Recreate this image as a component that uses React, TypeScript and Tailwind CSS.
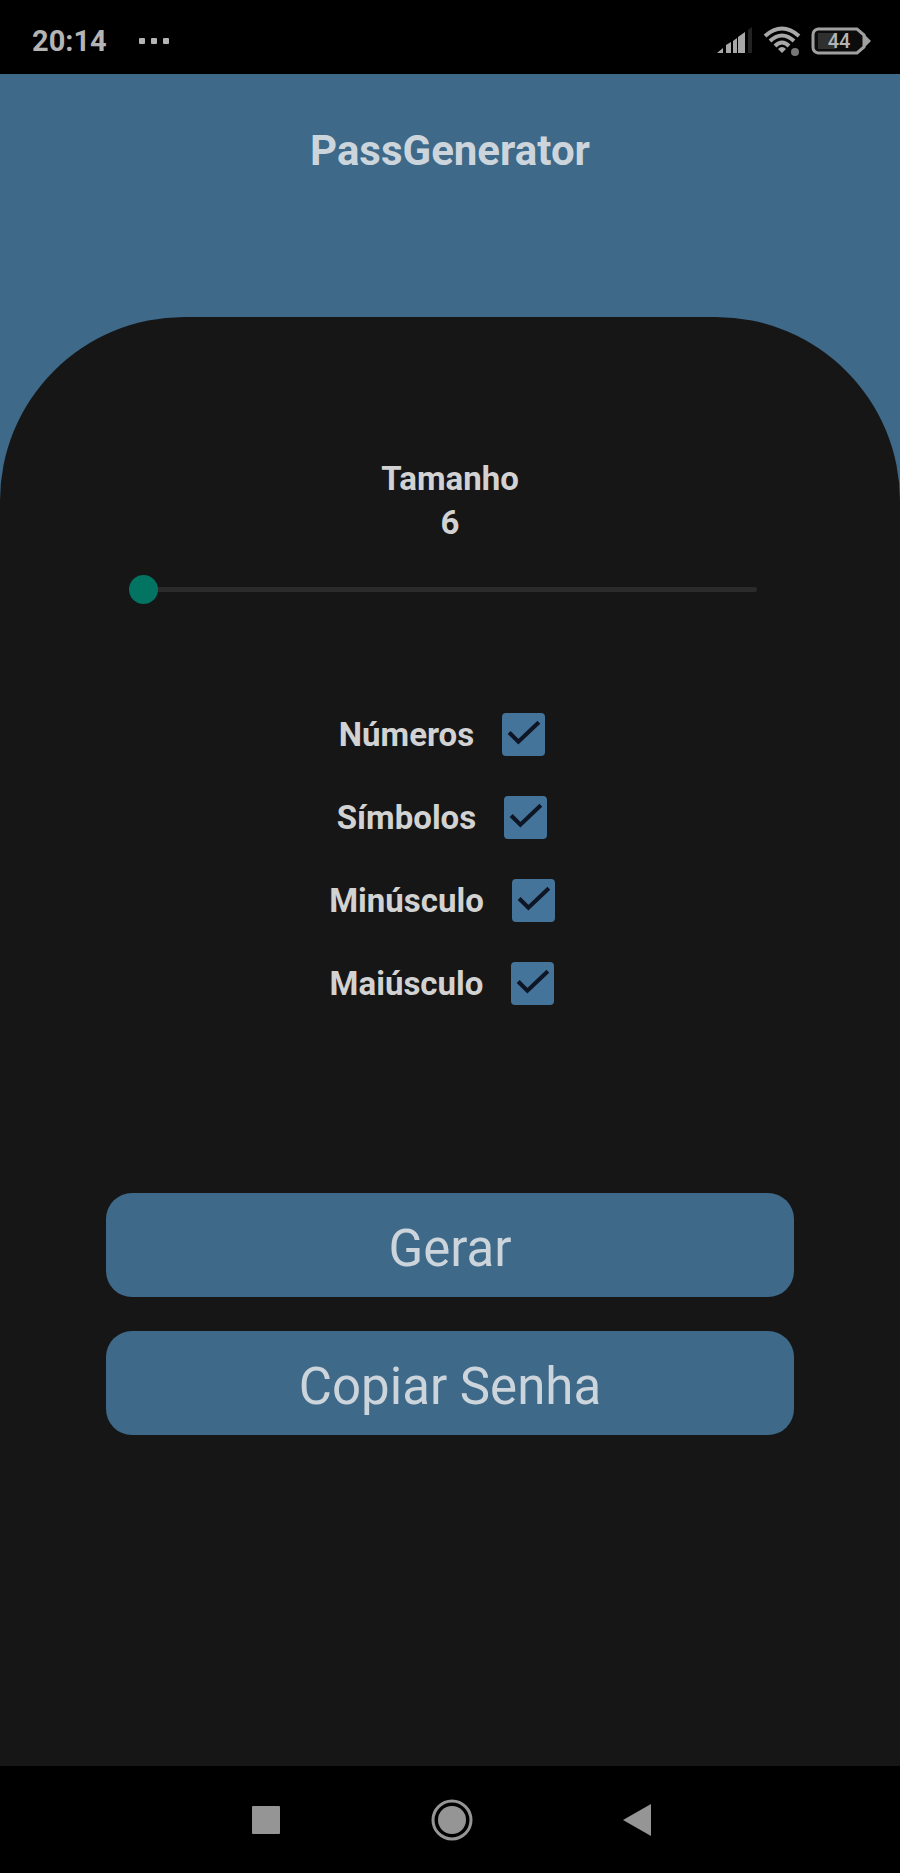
import { useState } from "react";

const OPTIONS = [
  { id: "numbers", label: "Números", chars: "0123456789" },
  { id: "symbols", label: "Símbolos", chars: "!@#$%&*()-_=+?" },
  { id: "lower", label: "Minúsculo", chars: "abcdefghijklmnopqrstuvwxyz" },
  { id: "upper", label: "Maiúsculo", chars: "ABCDEFGHIJKLMNOPQRSTUVWXYZ" },
];

function StatusBar() {
  return (
    <div className="flex h-[74px] shrink-0 items-center justify-between bg-black pl-8 pr-[29px] pt-2 text-[#b4b4b4]">
      <div className="flex items-center gap-[31px]">
        <span className="text-[29px] leading-8 font-bold">20:14</span>
        <svg width="32" height="8" viewBox="0 0 32 8" fill="currentColor">
          <rect x="1" y="1" width="6" height="6" rx="1" />
          <rect x="13" y="1" width="6" height="6" rx="1" />
          <rect x="25" y="1" width="6" height="6" rx="1" />
        </svg>
      </div>

      <div className="flex items-center gap-[10px]">
        {/* Signal */}
        <svg width="38" height="28" viewBox="0 0 38 28" fill="#a8a8a8">
          <path d="M2 26 L8 21 V26 Z" />
          <path d="M11 18 L16 15 V26 H11 Z" />
          <path d="M18 14 L22 11 V26 H18 Z" />
          <path d="M23 10 L30 5 V26 H23 Z" />
          <path d="M33 3 L37 0 V26 H33 Z" fill="#222222" />
        </svg>
        {/* Wifi */}
        <svg width="38" height="30" viewBox="0 0 38 30" fill="none" stroke="#a8a8a8">
          <path d="M2 10 Q19 -5 36 10" strokeWidth="4" />
          <path d="M7 15 Q19 4 31 15" strokeWidth="4" />
          <path d="M12 20 Q19 13 26 20" strokeWidth="4" />
          <path d="M15 23 Q19 19 23 23 L19 27 Z" fill="#a8a8a8" stroke="none" />
          <circle cx="32" cy="26" r="4" fill="#777777" stroke="none" />
        </svg>
        {/* Battery */}
        <svg width="60" height="28" viewBox="0 0 60 28">
          <path d="M7 2 H46 L53 8 V20 L46 26 H7 Q2 25 2 20 V8 Q2 3 7 2 Z" fill="#0c0c0c" stroke="#a0a0a0" strokeWidth="3" />
          <rect x="7" y="6" width="18" height="16" fill="#303030" />
          <path d="M54 8 L60 14 L54 20 Z" fill="#a0a0a0" />
          <text x="28" y="21" fill="#b4b4b4" fontSize="20" fontWeight="500" textAnchor="middle">44</text>
        </svg>
      </div>
    </div>
  );
}

function NavBar() {
  return (
    <nav className="flex h-[107px] shrink-0 items-center justify-center gap-[142px] bg-black pl-1 text-[#959595]">
      <button aria-label="Recentes">
        <svg width="44" height="44" viewBox="0 0 44 44" fill="currentColor">
          <rect x="8" y="8" width="28" height="28" rx="1" />
        </svg>
      </button>
      <button aria-label="Início">
        <svg width="44" height="44" viewBox="0 0 44 44" fill="currentColor">
          <circle cx="22" cy="22" r="19" fill="none" stroke="currentColor" strokeWidth="3" />
          <circle cx="22" cy="22" r="14" />
        </svg>
      </button>
      <button aria-label="Voltar">
        <svg width="44" height="44" viewBox="0 0 44 44" fill="currentColor">
          <path d="M7 22 L35 6 V38 Z" />
        </svg>
      </button>
    </nav>
  );
}

export default function App() {
  const [size, setSize] = useState(6);
  const [password, setPassword] = useState("");
  const [checked, setChecked] = useState<Record<string, boolean>>({
    numbers: true,
    symbols: true,
    lower: true,
    upper: true,
  });

  const handleGenerate = () => {
    const pool = OPTIONS.filter((o) => checked[o.id]).map((o) => o.chars).join("");
    if (!pool) return;
    setPassword(
      Array.from({ length: size }, () => pool[Math.floor(Math.random() * pool.length)]).join("")
    );
  };

  const handleCopy = () => navigator.clipboard.writeText(password);

  return (
    <div className="flex min-h-screen flex-col bg-[#3e6989] font-[Roboto,sans-serif] text-[#d2d2d2]">
      <StatusBar />

      <header className="flex h-[243px] shrink-0 justify-center pt-[53px]">
        <h1 className="text-[42px] leading-[48px] font-bold text-[#cdd5dc]">PassGenerator</h1>
      </header>

      <main className="flex flex-1 flex-col items-center rounded-t-[184px] bg-[#161616] px-[106px] pt-[140px]">
        <label htmlFor="size" className="flex flex-col items-center text-[33px] leading-[44px] font-bold">
          <span>Tamanho</span>
          <span>{size}</span>
        </label>
        <input
          id="size"
          type="range"
          min={6}
          max={20}
          value={size}
          onChange={(e) => setSize(Number(e.target.value))}
          className="mt-7 mr-[14px] h-8 w-[628px] max-w-full appearance-none bg-transparent [&::-webkit-slider-runnable-track]:h-[5px] [&::-webkit-slider-runnable-track]:rounded-full [&::-webkit-slider-runnable-track]:bg-[#2b2b2b] [&::-webkit-slider-thumb]:-mt-3 [&::-webkit-slider-thumb]:size-[29px] [&::-webkit-slider-thumb]:appearance-none [&::-webkit-slider-thumb]:rounded-full [&::-webkit-slider-thumb]:bg-[#037362]"
        />

        <div className="mt-[108px] flex flex-col items-center gap-10 pr-4">
          {OPTIONS.map((option) => (
            <label key={option.id} className="flex items-center gap-7 text-[33px] leading-[43px] font-bold">
              {option.label}
              <span className="relative size-[43px]">
                <input
                  type="checkbox"
                  checked={checked[option.id]}
                  onChange={(e) => setChecked({ ...checked, [option.id]: e.target.checked })}
                  className="peer block size-[43px] appearance-none rounded-[4px] border-4 border-[#44749a] checked:bg-[#44749a]"
                />
                <svg
                  className="pointer-events-none absolute inset-0 hidden peer-checked:block"
                  viewBox="0 0 42 42"
                  fill="none"
                  stroke="#0e1524"
                  strokeWidth="4"
                >
                  <path d="M7 19 L16 28 L36 9" />
                </svg>
              </span>
            </label>
          ))}
        </div>

        <output className="mt-[104px] h-14 w-full text-center text-[33px] leading-[56px]">{password}</output>

        <div className="mt-7 mb-10 flex w-full flex-col gap-[34px] text-[51px] leading-[96px] text-[#ccd5dc]">
          <button onClick={handleGenerate} className="h-[104px] rounded-[26px] bg-[#3e6989] pt-2">
            Gerar
          </button>
          <button onClick={handleCopy} className="h-[104px] rounded-[26px] bg-[#3e6989] pt-2">
            Copiar Senha
          </button>
        </div>
      </main>

      <NavBar />
    </div>
  );
}
